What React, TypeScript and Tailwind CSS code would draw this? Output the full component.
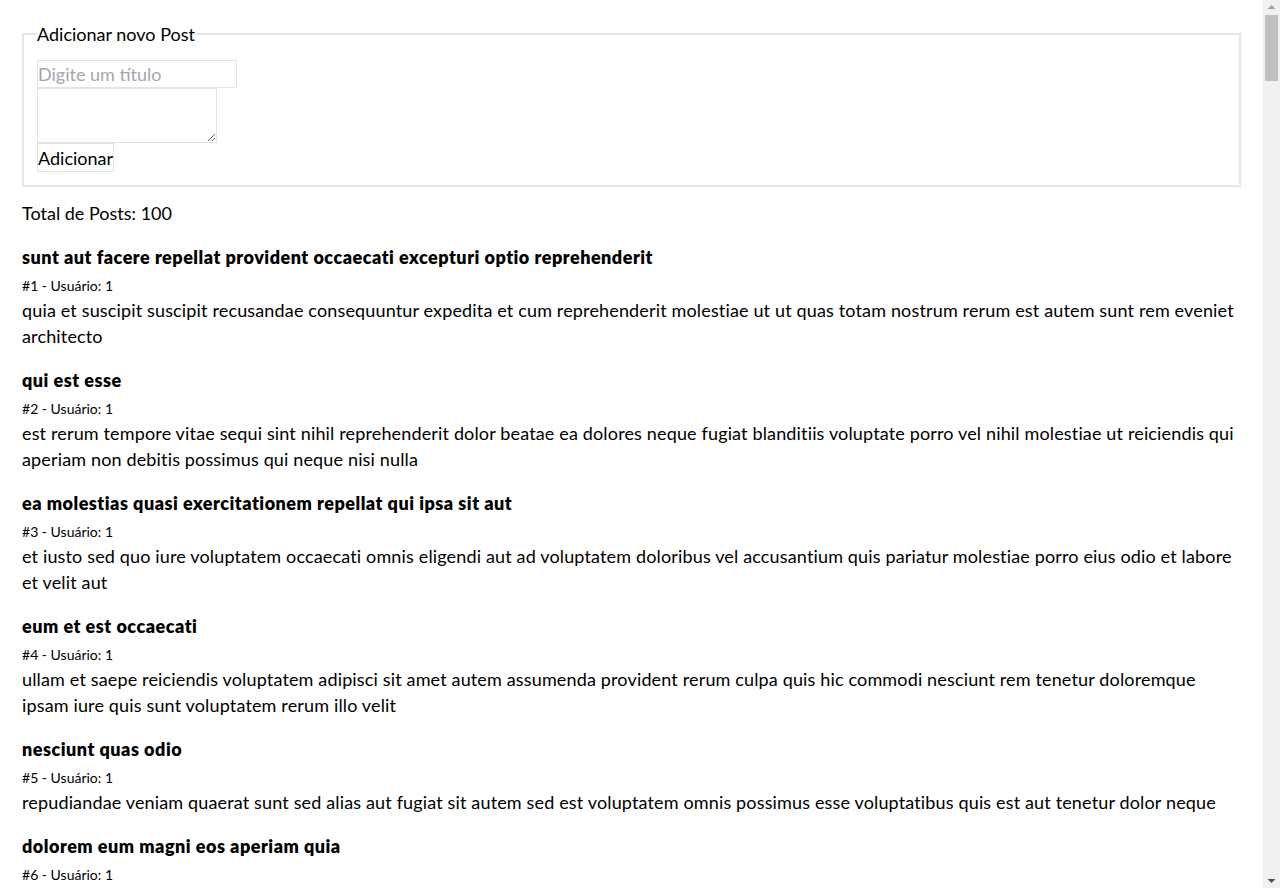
import React from "react";

const base = [
  {
    title: "sunt aut facere repellat provident occaecati excepturi optio reprehenderit",
    body: "quia et suscipit\nsuscipit recusandae consequuntur expedita et cum\nreprehenderit molestiae ut ut quas totam\nnostrum rerum est autem sunt rem eveniet architecto",
  },
  {
    title: "qui est esse",
    body: "est rerum tempore vitae\nsequi sint nihil reprehenderit dolor beatae ea dolores neque\nfugiat blanditiis voluptate porro vel nihil molestiae ut reiciendis\nqui aperiam non debitis possimus qui neque nisi nulla",
  },
  {
    title: "ea molestias quasi exercitationem repellat qui ipsa sit aut",
    body: "et iusto sed quo iure\nvoluptatem occaecati omnis eligendi aut ad\nvoluptatem doloribus vel accusantium quis pariatur\nmolestiae porro eius odio et labore et velit aut",
  },
  {
    title: "eum et est occaecati",
    body: "ullam et saepe reiciendis voluptatem adipisci\nsit amet autem assumenda provident rerum culpa\nquis hic commodi nesciunt rem tenetur doloremque ipsam iure\nquis sunt voluptatem rerum illo velit",
  },
  {
    title: "nesciunt quas odio",
    body: "repudiandae veniam quaerat sunt sed\nalias aut fugiat sit autem sed est\nvoluptatem omnis possimus esse voluptatibus quis\nest aut tenetur dolor neque",
  },
  {
    title: "dolorem eum magni eos aperiam quia",
    body: "ut aspernatur corporis harum nihil quis provident sequi\nmollitia nobis aliquid molestiae\nperspiciatis et ea nemo ab reprehenderit accusantium quas\nvoluptate dolores velit et doloremque molestiae",
  },
  {
    title: "magnam facilis autem",
    body: "dolore placeat quibusdam ea quo vitae\nmagni quis enim qui quis quo nemo aut saepe\nquidem repellat excepturi ut quia\nsunt ut sequi eos ea sed quas",
  },
  {
    title: "dolorem dolore est ipsam",
    body: "dignissimos aperiam dolorem qui eum\nfacilis quibusdam animi sint suscipit qui sint possimus cum\nquaerat magni maiores excepturi\nipsam ut commodi dolor voluptatum modi aut vitae",
  },
  {
    title: "nesciunt iure omnis dolorem tempora et accusantium",
    body: "consectetur animi nesciunt iure dolore\nenim quia ad\nveniam autem ut quam aut nobis\net est aut quod aut provident voluptas autem voluptas",
  },
  {
    title: "optio molestias id quia eum",
    body: "quo et expedita modi cum officia vel magni\ndoloribus qui repudiandae\nvero nisi sit\nquos veniam quod sed accusamus veritatis error",
  },
];

const posts = Array.from({ length: 100 }, (_, i) => {
  const b = base[i % 10];
  return {
    id: i + 1,
    userId: Math.floor(i / 10) + 1,
    title: b.title,
    body: b.body.replace(/\n/g, " "),
  };
});

function ScrollBar() {
  return (
    <div className="w-[17px] shrink-0 h-full bg-[#f1f1f1] flex flex-col items-center">
      <svg width="17" height="15" viewBox="0 0 17 15" className="shrink-0">
        <path d="M4.5 9 L8.5 5 L12.5 9 Z" fill="#a3a3a3" />
      </svg>
      <div className="w-[13px] h-[66px] bg-[#c1c1c1]" />
      <div className="flex-1" />
      <svg width="17" height="15" viewBox="0 0 17 15" className="shrink-0">
        <path d="M4.5 6 L12.5 6 L8.5 10 Z" fill="#505050" />
      </svg>
    </div>
  );
}

export default function App() {
  return (
    <div className="flex h-screen overflow-hidden bg-white text-black font-['Lato',sans-serif]">
      <main className="flex-1 min-w-0 overflow-hidden px-[22px] pt-[21px] pb-[20px]">
        <fieldset className="border-2 border-[#e6e6e9] px-[13px] pb-[13px]">
          <legend className="text-[18px] leading-[26px]">Adicionar novo Post</legend>
          <div className="flex flex-col items-start pt-[13px]">
            <input
              type="text"
              placeholder="Digite um título"
              className="w-[200px] h-[28px] border border-[#e3e3e6] px-0 text-[18px] leading-[26px] placeholder:text-[#a3a7ae] outline-none"
            />
            <textarea className="w-[180px] h-[55px] border border-[#e3e3e6] outline-none" />
            <button className="h-[29px] border border-[#e3e3e6] px-0 text-[18px] leading-[26px] bg-white">
              Adicionar
            </button>
          </div>
        </fieldset>
        <p className="mt-[13px] text-[18px] leading-[26px]">Total de Posts: {posts.length}</p>
        <ul className="mt-[18px]">
          {posts.map((p) => (
            <li key={p.id} className="mb-[18px]">
              <h2 className="text-[18px] leading-[26px] font-extrabold tracking-[0.5px]">{p.title}</h2>
              <p className="mt-[6px] mb-[1px] text-[14px] leading-[20px]">
                #{p.id} - Usuário: {p.userId}
              </p>
              <p className="text-[18px] leading-[26px] tracking-[0.15px]">{p.body}</p>
            </li>
          ))}
        </ul>
      </main>
      <ScrollBar />
    </div>
  );
}
